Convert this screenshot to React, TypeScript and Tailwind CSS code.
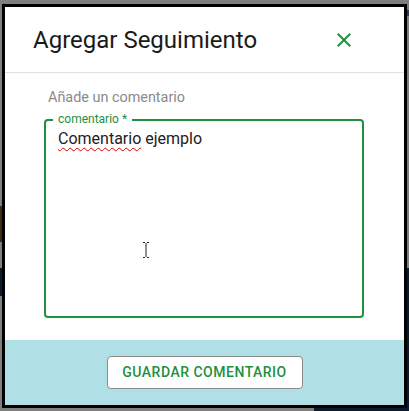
import React from "react";

export default function App() {
  return (
    <div
      className="relative w-[409px] h-[411px] overflow-hidden bg-[#7f7f7f] pl-[2px] pt-[4px]"
      style={{ fontFamily: "Roboto, 'Liberation Sans', sans-serif" }}
    >
      {/* page behind the backdrop */}
      <div className="absolute left-0 top-[206px] w-[2px] h-[36px] bg-[#3b2c12]" />
      <div className="absolute left-0 top-[268px] w-[2px] h-[28px] bg-[#0a1b2e]" />
      <div className="absolute right-0 top-[268px] w-[3px] h-[143px] bg-[#0a1b2e]" />
      <div className="absolute right-0 top-[10px] w-[2px] h-[6px] bg-[#2a3b5a]" />
      <div className="absolute left-[314px] bottom-0 w-[95px] h-[3px] bg-[#0a1b2e]" />

      <div className="relative w-[405px] h-[404px] border-[3px] border-black bg-white flex flex-col">
        {/* header */}
        <div className="h-[66px] shrink-0 border-b border-[#e0e0e0] flex items-center justify-between pl-[28px] pr-[48px]">
          <h2 className="text-[24px] leading-none text-[#1a1a1a]">
            Agregar Seguimiento
          </h2>
          <svg viewBox="0 0 24 24" width="24" height="24" fill="#1f8f40">
            <path d="M19 6.41 17.59 5 12 10.59 6.41 5 5 6.41 10.59 12 5 17.59 6.41 19 12 13.41 17.59 19 19 17.59 13.41 12z" />
          </svg>
        </div>

        {/* body */}
        <div className="flex-1 flex flex-col pt-[13px] pl-[39px]">
          <div className="pl-[4px] text-[14.4px] leading-[24px] text-[#8a8a8a]">Añade un comentario</div>
          <div className="relative mt-[9px] w-[320px] h-[199px] rounded-[4px] border-2 border-[#1f8f40] px-[12px] pt-[6px]">
            <span className="absolute left-[7px] top-[-9px] bg-white px-[5px] text-[12px] leading-[14px] text-[#1f8f40]">
              comentario *
            </span>
            <div className="text-[16px] leading-[24px] text-[#222]">
              <span
                className="underline decoration-wavy decoration-[#e00000] decoration-1 underline-offset-[3px]"
                style={{ textDecorationSkipInk: "none" }}
              >
                Comentario
              </span>{" "}
              ejemplo
            </div>
            <svg
              className="absolute left-[96px] top-[120px]"
              width="8"
              height="18"
              viewBox="0 0 8 18"
            >
              <path d="M1 1.5h6M1 16.5h6M4 1.5v15" stroke="#fff" strokeWidth="3" fill="none" />
              <path d="M1 1.5h2M5 1.5h2M1 16.5h2M5 16.5h2M4 2v14" stroke="#222" strokeWidth="1" fill="none" />
            </svg>
          </div>
        </div>

        {/* footer */}
        <div className="h-[65px] shrink-0 bg-[#b0dfe5] flex items-center justify-center">
          <button className="w-[196px] h-[33px] rounded-[4px] border border-[#8a8a8a] bg-white text-[14px] font-medium tracking-[0.5px] text-[#1f8f40]">
            GUARDAR COMENTARIO
          </button>
        </div>
      </div>
    </div>
  );
}
